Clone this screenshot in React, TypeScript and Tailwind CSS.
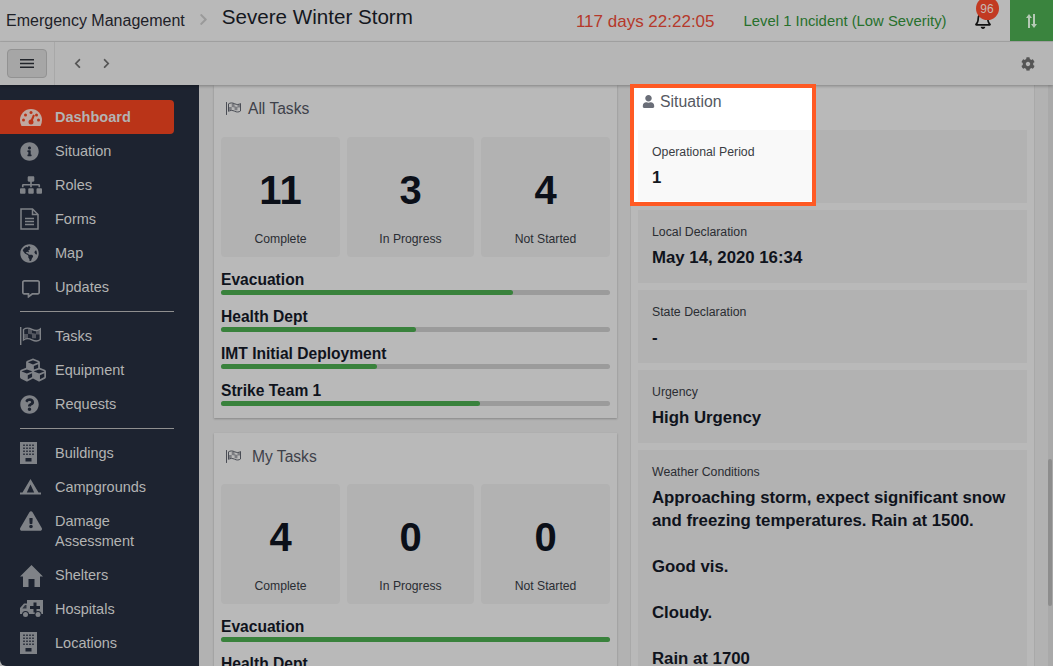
import React from 'react';
import {
  FaChevronLeft, FaChevronRight, FaCog, FaCubes, FaExclamationTriangle, FaGlobeAmericas, FaInfoCircle,
  FaQuestionCircle, FaRegBell, FaRegCommentAlt, FaSitemap, FaUser,
} from 'react-icons/fa';

const navBg = '#1d2330';

function Gauge() {
  return (
    <svg width="22" height="17" viewBox="0 0 22 17" fill="currentColor">
      <path d="M11 0a11 11 0 0 1 11 11c0 2-.5 4-1.500 6h-19C.5 15 0 13 0 11A11 11 0 0 1 11 0z" />
      <g fill="#ba3418">
        <circle cx="11" cy="3.500" r="1.500" />
        <circle cx="5.500" cy="6" r="1.500" />
        <circle cx="3.500" cy="11" r="1.500" />
        <circle cx="16.500" cy="6" r="1.500" />
        <circle cx="18.500" cy="11" r="1.500" />
        <circle cx="11" cy="13" r="2.500" />
      </g>
      <path d="m11 13 3-7" stroke="#ba3418" strokeWidth="2" />
    </svg>
  );
}

function FileIcon() {
  return (
    <svg width="19" height="22" viewBox="0 0 19 22" fill="none" stroke="currentColor" strokeWidth="1.500">
      <path d="M1 1h11.500L18 6.500V21H1z" />
      <path d="M12.500 1v5.500H18" />
      <path d="M5 10.500h9M5 13.500h9M5 16.500h9" />
    </svg>
  );
}

function Flag({ width = 21, height = 18 }: { width?: number; height?: number }) {
  return (
    <svg width={width} height={height} viewBox="0 0 21 18" fill="currentColor">
      <rect x="0" y="0" width="1.400" height="18" />
      <path d="M3.500 2.500C6 .8 9 .8 12 2.300s6 1.500 8.300-.3V12.500c-2.300 1.800-5.300 1.800-8.300.3s-6-1.500-8.500.2z" fill="none" stroke="currentColor" strokeWidth="1.400" />
      <path d="M8 2h4v4l4 .8V3.500h4v4h-4v3.800h-4V7.500L8 6.800V11H4V7h4z" opacity="0.55" />
    </svg>
  );
}

function Building() {
  const cols = [3, 6, 9, 12];
  const rows = [2.500, 5.500, 8.500, 11.500];
  return (
    <svg width="17" height="22" viewBox="0 0 17 22">
      <rect width="17" height="22" fill="currentColor" />
      {rows.map((y) => cols.map((x) => <rect key={`${x}-${y}`} x={x} y={y} width="2" height="1.500" fill={navBg} opacity="0.75" />))}
      <rect x="5.500" y="16" width="6" height="3.500" fill={navBg} />
    </svg>
  );
}

function Tent() {
  return (
    <svg width="21" height="16" viewBox="0 0 21 16" fill="currentColor" fillRule="evenodd">
      <path d="M10.500 0 18.500 13.500H21v2H0v-2h2.500zM10.500 5.500 6.800 13.500h7.400z" />
    </svg>
  );
}

function House() {
  return (
    <svg width="23" height="22" viewBox="0 0 23 22" fill="currentColor" className="mt-0.5">
      <path d="M11.500 0 23 11.500h-3V22h-5.500v-8h-6v8H3V11.500H0z" />
    </svg>
  );
}

function Ambulance() {
  return (
    <svg width="23" height="18" viewBox="0 0 23 18" fill="currentColor">
      <path d="M7 0h16v14H0V8l4-4.500h3z" />
      <path d="M6.500 5v3.500H2.300L5 5z" fill={navBg} opacity="0.8" />
      <path d="M13.500 2.500h3v3.500H20v3h-3.500v3.500h-3V9H10V6h3.500z" fill={navBg} />
      <circle cx="5.500" cy="14.500" r="3.500" fill={navBg} />
      <circle cx="5.500" cy="14.500" r="2.500" />
      <circle cx="18" cy="14.500" r="3.500" fill={navBg} />
      <circle cx="18" cy="14.500" r="2.500" />
    </svg>
  );
}

function SortArrows() {
  return (
    <svg width="11" height="14" viewBox="0 0 11 14" fill="currentColor">
      <path d="M3 0 6 4H4v10H2V4H0z" />
      <path d="M7 0h2v10h2l-3 4-3-4h2z" />
    </svg>
  );
}

function Hamburger() {
  return (
    <svg width="14" height="9" viewBox="0 0 14 9" fill="currentColor">
      <path d="M0 0h14v1.500H0zM0 3.750h14v1.500H0zM0 7.500h14V9H0z" />
    </svg>
  );
}

const navGroups = [
  [
    { label: 'Dashboard', icon: <Gauge />, active: true },
    { label: 'Situation', icon: <FaInfoCircle size={19} /> },
    { label: 'Roles', icon: <FaSitemap size={22} /> },
    { label: 'Forms', icon: <FileIcon /> },
    { label: 'Map', icon: <FaGlobeAmericas size={19} /> },
    { label: 'Updates', icon: <FaRegCommentAlt size={18} className="mt-1 ml-0.5" /> },
  ],
  [
    { label: 'Tasks', icon: <Flag /> },
    { label: 'Equipment', icon: <FaCubes size={26} /> },
    { label: 'Requests', icon: <FaQuestionCircle size={19} /> },
  ],
  [
    { label: 'Buildings', icon: <Building /> },
    { label: 'Campgrounds', icon: <Tent /> },
    { label: 'Damage Assessment', icon: <FaExclamationTriangle size={22} /> },
    { label: 'Shelters', icon: <House /> },
    { label: 'Hospitals', icon: <Ambulance /> },
    { label: 'Locations', icon: <Building /> },
  ],
];

function Sidebar() {
  return (
    <nav className="w-[199px] shrink-0 bg-[#1d2330] pt-[15px] rounded-bl-md text-[14.5px] text-[#b3b3b3]">
      {navGroups.map((group, i) => (
        <div key={i}>
          {i > 0 ? <div className="my-[7px] ml-5 w-[154px] h-px bg-[#8f8f8f]" /> : null}
          {group.map((item) => (
            <div
              key={item.label}
              className={`flex w-[174px] items-start py-[7px] leading-5 rounded-r ${item.active ? 'bg-[#ba3418] font-bold' : ''}`}
            >
              <span className="w-5 shrink-0" />
              <span className={`flex h-5 w-[35px] shrink-0 items-center ${item.active ? 'text-[#c0a8a0]' : 'text-[#7f8287]'}`}>
                {item.icon}
              </span>
              <span className="w-[100px]">{item.label}</span>
            </div>
          ))}
        </div>
      ))}
    </nav>
  );
}

const allBars = [
  { name: 'Evacuation', pct: 75 },
  { name: 'Health Dept', pct: 50 },
  { name: 'IMT Initial Deployment', pct: 40 },
  { name: 'Strike Team 1', pct: 66.6 },
];
const myBars = [
  { name: 'Evacuation', pct: 100 },
  { name: 'Health Dept', pct: 100 },
];

function TaskCard({ title, counts, bars, gap, headerHeight }: { title: string; counts: string[]; bars: { name: string; pct: number }[]; gap: string; headerHeight: string }) {
  const labels = ['Complete', 'In Progress', 'Not Started'];
  return (
    <section className="bg-[#b9b9b9] px-[7px] pb-3 shadow-[0_1px_2px_rgba(0,0,0,0.25)]">
      <header className={`flex items-start pl-[5px] pt-[15px] text-[15.6px] leading-[18px] text-[#3e414a] ${headerHeight}`}>
        <span className={`mt-0.5 shrink-0 text-[#4a4d55] ${gap}`}>
          <Flag width={15} height={13} />
        </span>
        {title}
      </header>
      <div className="grid grid-cols-[119fr_127fr_129fr] gap-[7px]">
        {counts.map((count, i) => (
          <div key={i} className="flex h-[120px] flex-col items-center rounded-sm bg-[#b2b2b2] pt-[29px]">
            <div className="text-[40px] font-bold leading-[48px] text-[#0b0f18]">{count}</div>
            <div className="mt-[17px] text-[12.2px] leading-4 text-[#2a2d33]">{labels[i]}</div>
          </div>
        ))}
      </div>
      <div className="mt-3 flex flex-col gap-[11px]">
        {bars.map((bar) => (
          <div key={bar.name}>
            <div className="text-[15.6px] font-bold leading-[21px] text-[#0f131c]">{bar.name}</div>
            <div className="h-[5px] rounded-sm bg-[#9b9b9b]">
              <div className="h-full rounded-sm bg-[#39823c]" style={{ width: `${bar.pct}%` }} />
            </div>
          </div>
        ))}
      </div>
    </section>
  );
}

function InfoTile({ label, value }: { label: string; value: React.ReactNode }) {
  return (
    <div className="min-h-[73px] bg-[#b2b2b2] px-3.5 pt-[15px] pb-2.5">
      <div className="text-[12.3px] leading-[14px] text-[#2a2d33]">{label}</div>
      <div className="mt-[7px] text-[16.8px] font-bold leading-[23px] text-[#0f131c]">{value}</div>
    </div>
  );
}

export default function App() {
  return (
    <div className="relative flex h-[666px] w-[1053px] flex-col overflow-hidden bg-[#b2b2b2] font-['Liberation_Sans',sans-serif]">
      <div className="flex h-[42px] shrink-0 items-center whitespace-nowrap border-b border-[#a8a8a8] bg-[#b9b9b9] pl-1.5">
        <span className="shrink-0 text-base text-[#1e2128]">Emergency Management</span>
        <FaChevronRight size={13} className="ml-3 -mt-0.5 shrink-0 text-[#9a9a9a]" />
        <span className="ml-3 -mt-[7px] shrink-0 text-[20.6px] text-[#14171e]">Severe Winter Storm</span>
        <span className="ml-[163px] mt-0.5 shrink-0 text-[17px] text-[#b5382a]">117 days 22:22:05</span>
        <span className="ml-[29px] mt-0.5 shrink-0 text-[14.85px] text-[#27702c]">Level 1 Incident (Low Severity)</span>
        <div className="relative ml-[27px] h-[41px] w-[30px] shrink-0">
          <FaRegBell size={18} className="mt-[11px] text-[#111]" />
          <span className="absolute -top-[3px] left-[2px] flex h-[23px] w-[23px] items-center justify-center rounded-full bg-[#c23a22] text-xs text-[#c8b8b2]">96</span>
        </div>
        <div className="ml-auto flex h-[41px] w-[43px] shrink-0 items-center justify-center bg-[#3a843e] text-[#b5c9b5]">
          <SortArrows />
        </div>
      </div>
      <div className="relative z-10 flex h-[43px] shrink-0 items-center bg-[#b6b6b6] shadow-[0_1px_3px_rgba(0,0,0,0.3)]">
        <div className="flex h-full w-[55px] items-center border-r border-[#a8a8a8] pl-[7px]">
          <button className="flex h-[29px] w-10 items-center justify-center rounded-sm border border-[#929292] bg-[#a6a6a6] text-[#22252b]">
            <Hamburger />
          </button>
        </div>
        <FaChevronLeft size={11} className="ml-[17px] text-[#555]" />
        <FaChevronRight size={11} className="ml-[18px] text-[#555]" />
        <FaCog size={14} className="ml-auto mr-[18px] text-[#555]" />
      </div>
      <div className="flex min-h-0 flex-1">
        <Sidebar />
        <main className="flex min-w-0 flex-1 items-start gap-[13px] overflow-hidden pl-[15px]">
          <div className="flex w-[403px] shrink-0 flex-col gap-[15px]">
            <TaskCard title="All Tasks" counts={['11', '3', '4']} bars={allBars} gap="mr-[7px]" headerHeight="h-[52px]" />
            <TaskCard title="My Tasks" counts={['4', '0', '0']} bars={myBars} gap="mr-[11px]" headerHeight="h-[51px]" />
          </div>
          <div className="flex w-[405px] shrink-0 flex-col gap-[7px] border-x border-[#a9a9a9] bg-[#b9b9b9] pl-[7px] pr-[7px] pt-[45px]">
            <InfoTile label="Operational Period" value="1" />
            <InfoTile label="Local Declaration" value="May 14, 2020 16:34" />
            <InfoTile label="State Declaration" value="-" />
            <InfoTile label="Urgency" value="High Urgency" />
            <InfoTile
              label="Weather Conditions"
              value={<>Approaching storm, expect significant snow<br />and freezing temperatures. Rain at 1500.<br /><br />Good vis.<br /><br />Cloudy.<br /><br />Rain at 1700</>}
            />
          </div>
        </main>
      </div>
      <div className="absolute bottom-0 right-0 top-[85px] w-[5px] bg-[#a9a9a9]">
        <div className="mt-[374px] h-[147px] w-1 rounded-sm bg-[#8d8d8d]" />
      </div>
      <div className="absolute left-[630px] top-[84px] z-20 h-[122px] w-[186px] border-4 border-[#ff5a24] bg-white">
        <div className="flex h-[42px] items-start pl-2 pt-[5px] text-[15.8px] leading-[18px] text-[#555862]">
          <FaUser size={13} className="mt-[2px] mr-[5px] text-[#6a6e78]" />
          Situation
        </div>
        <div className="ml-1 h-[71px] bg-[#f9f9f9] pl-3.5 pt-[15px]">
          <div className="text-[12.3px] leading-[14px] text-[#3a3d44]">Operational Period</div>
          <div className="mt-[7px] text-[16.8px] font-bold leading-[23px] text-[#15181f]">1</div>
        </div>
      </div>
    </div>
  );
}
